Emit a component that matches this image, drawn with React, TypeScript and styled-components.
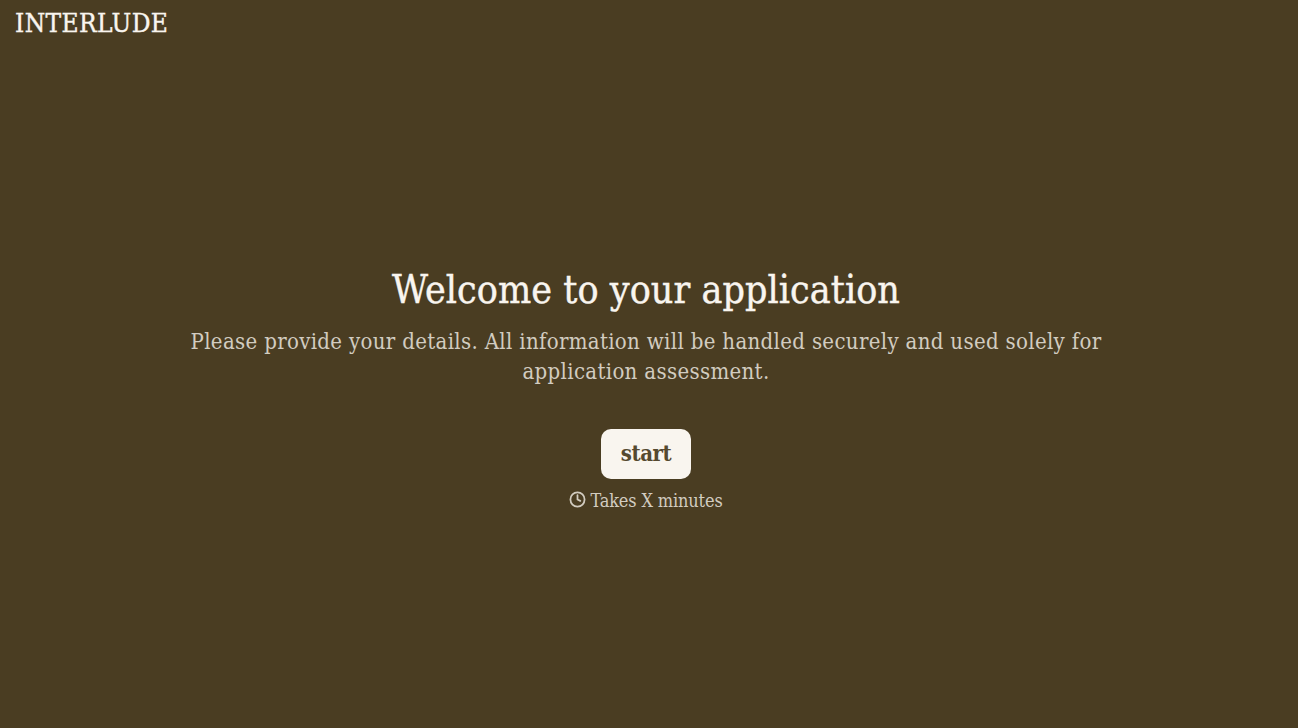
import * as React from "react";
import styled, { createGlobalStyle } from "styled-components";
import { Clock } from "lucide-react";

const FONT = `"DejaVu Serif Condensed", "DejaVu Serif", serif`;

const Global = createGlobalStyle`
  html, body {
    margin: 0;
    padding: 0;
    background: #4a3d22;
  }
`;

const Page = styled.div`
  height: 728px;
  display: flex;
  flex-direction: column;
  font-family: ${FONT};
  background: #4a3d22;
  overflow: hidden;
`;

const Header = styled.header`
  height: 46px;
  padding: 8px 15px 0;
  box-sizing: border-box;
`;

const Logo = styled.div`
  font-size: 26px;
  line-height: 30px;
  color: #f9f5ef;
  letter-spacing: 0.4px;
  -webkit-text-stroke: 0.4px #f9f5ef;
`;

const Main = styled.main`
  display: flex;
  flex-direction: column;
  align-items: center;
  padding: 220px 6px 0 0;
`;

const Title = styled.h1`
  margin: 0;
  font-size: 39px;
  line-height: 48px;
  font-weight: 400;
  color: #f9f5ef;
  letter-spacing: 0.06px;
  -webkit-text-stroke: 0.4px #f9f5ef;
`;

const Sub = styled.p`
  margin: 13px 0 0;
  width: 930px;
  text-align: center;
  font-size: 22px;
  line-height: 30px;
  color: #d2ccc0;
  letter-spacing: 0.33px;
`;

const StartButton = styled.button`
  margin-top: 42px;
  width: 90px;
  height: 50px;
  border: 0;
  border-radius: 10px;
  background: #f9f5ef;
  color: #55492f;
  font-family: ${FONT};
  font-size: 22px;
  font-weight: 700;
  letter-spacing: -0.4px;
  padding: 0 0 3px;
`;

const Note = styled.div`
  margin-top: 11px;
  display: flex;
  align-items: center;
  gap: 4px;
  font-size: 18px;
  line-height: 22px;
  color: #d2ccc0;
  letter-spacing: -0.15px;
`;

const NoteIcon = styled(Clock)`
  margin-top: -4px;
`;

export default function App() {
  return (
    <Page>
      <Global />
      <Header>
        <Logo>INTERLUDE</Logo>
      </Header>
      <Main>
        <Title>Welcome to your application</Title>
        <Sub>
          Please provide your details. All information will be handled securely
          and used solely for application assessment.
        </Sub>
        <StartButton>start</StartButton>
        <Note>
          <NoteIcon size={17} strokeWidth={2.5} />
          Takes X minutes
        </Note>
      </Main>
    </Page>
  );
}
